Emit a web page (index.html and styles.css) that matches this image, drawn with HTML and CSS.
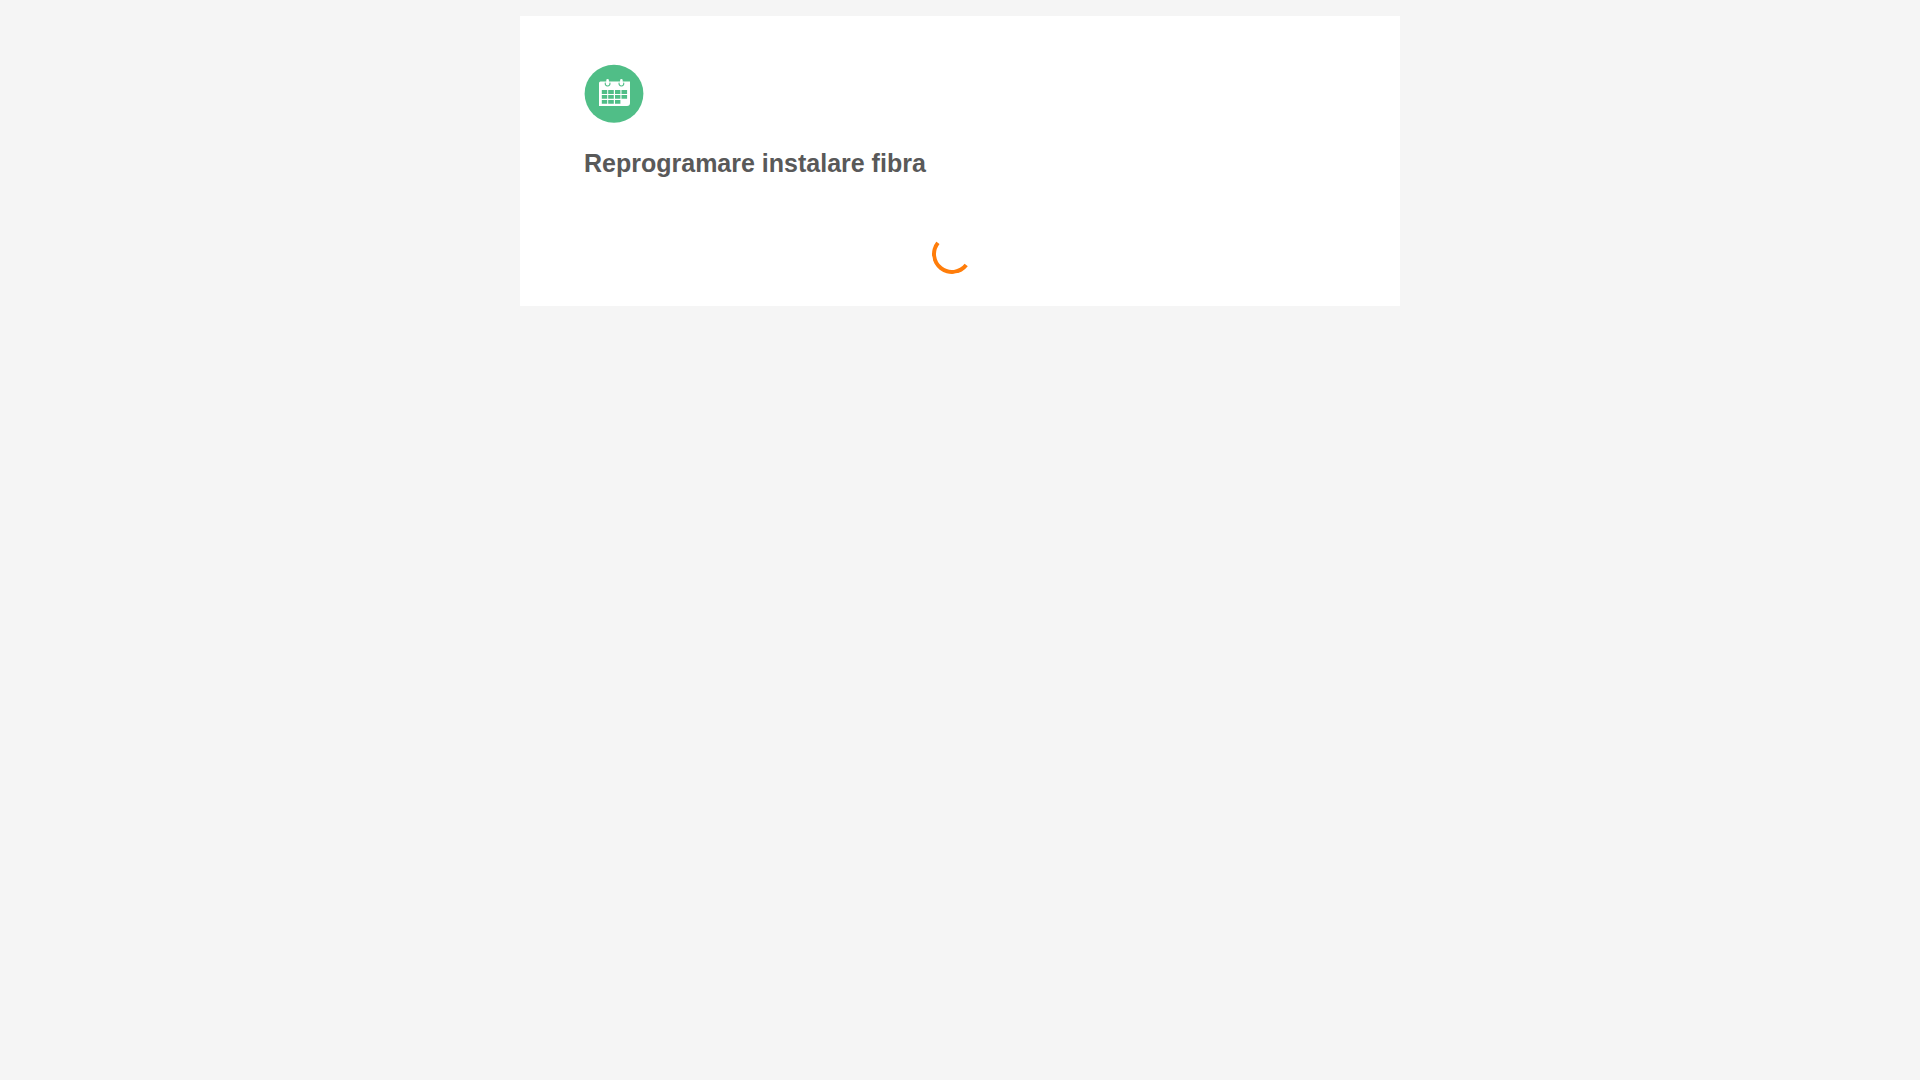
FILE: index.html
```
<!DOCTYPE html>
<html lang="ro">
<head>
    <meta charset="UTF-8">
    <meta name="viewport" content="width=device-width, initial-scale=1.0">
    <title>Reprogramare instalare fibra</title>
    <link rel="stylesheet" href="styles.css">
</head>
<body>

    <main class="card">
        <svg class="card-icon" xmlns="http://www.w3.org/2000/svg" viewBox="0 0 60 60" aria-hidden="true">
            <ellipse cx="30" cy="29.7" rx="29.4" ry="29" fill="#50be87"/>
            <!-- page -->
            <path d="M16.5 17.5H46V39q0 3-3 3H15V19q0-1.5 1.5-1.5z" fill="#fff"/>
            <!-- rings -->
            <path d="M21.4 18.6a2.4 2.4 0 1 0 4.4 0M35.2 18.6a2.4 2.4 0 1 0 4.4 0" fill="none" stroke="#50be87" stroke-width="1.1"/>
            <path d="M22.3 16.2a1.3 1.3 0 0 1 2.6 0v3.6a1.3 1.3 0 0 1-2.6 0zM36.1 16.2a1.3 1.3 0 0 1 2.6 0v3.6a1.3 1.3 0 0 1-2.6 0z" fill="#fff"/>
            <!-- days -->
            <g fill="#50be87">
                <path d="M17.8 26h5.4v3.9h-5.4zM24.2 26h5.6v3.9h-5.6zM31 26h5.4v3.9H31zM37.5 26h5.6v3.9h-5.6z"/>
                <path d="M17.8 31h5.4v3.8h-5.4zM24.2 31h5.6v3.8h-5.6zM31 31h5.4v3.8H31zM37.5 31h5.6v3.8h-5.6z"/>
                <path d="M17.8 36h5.4v3.7h-5.4zM24.2 36h5.6v3.7h-5.6zM31 36h5.4v3.7H31z"/>
            </g>
        </svg>
        <h1 class="card-title">Reprogramare instalare fibra</h1>
        <div class="loader">
            <div class="spinner" role="status" aria-label="Se încarcă"></div>
        </div>
    </main>

</body>
</html>
```
FILE: styles.css
```
* {
    box-sizing:border-box;
}
body {
    margin:0;
    padding:16px;
    background:#f5f5f5;
    color:#595959;
    font-family:"Helvetica Neue", "Liberation Sans", Arial, sans-serif;
}
.card {
    max-width:880px;
    margin:0 auto;
    padding:48px 64px 32px;
    background:#fff;
}
.card-icon {
    display:block;
    width:60px;
    height:60px;
}
.card-title {
    margin:24px 0 0;
    font-size:25px;
    line-height:30px;
    font-weight:700;
}
.loader {
    display:flex;
    justify-content:center;
    padding:56px 16px 0 0;
}
.spinner {
    width:40px;
    height:40px;
    border:4px solid #ff7d0a;
    border-top-color:transparent;
    border-right-color:transparent;
    border-radius:50%;
    transform:rotate(-7deg);
}
```
